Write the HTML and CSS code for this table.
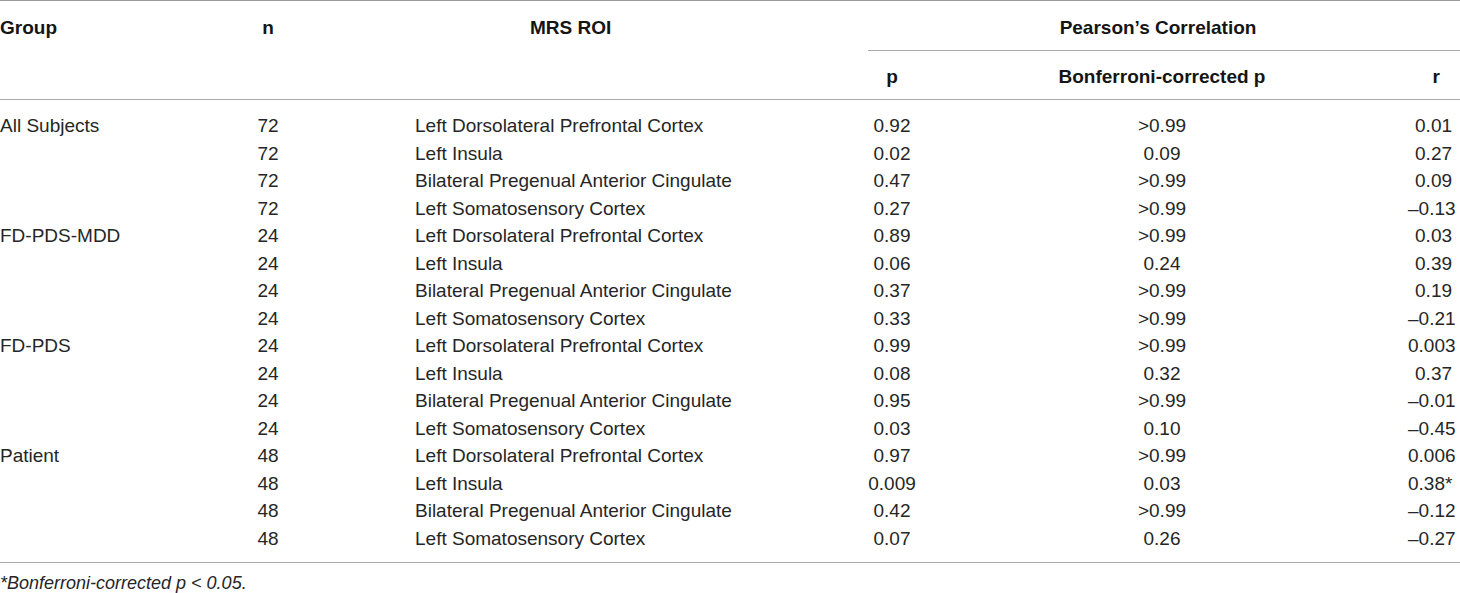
FILE: index.html
```html
<!DOCTYPE html>
<html>
<head>
<meta charset="utf-8">
<link rel="stylesheet" href="styles.css">
</head>
<body>
<div class="wrap">
<table class="tbl">
<colgroup>
<col class="c-group"><col class="c-n"><col class="c-roi"><col class="c-p"><col class="c-bp"><col class="c-r">
</colgroup>
<thead>
<tr class="h1">
<th class="th-group">Group</th>
<th class="th-n">n</th>
<th class="th-roi">MRS ROI</th>
<th class="th-pearson" colspan="3">Pearson’s Correlation</th>
</tr>
<tr class="h2">
<th></th><th></th><th></th>
<th class="th-p">p</th>
<th class="th-bp">Bonferroni-corrected p</th>
<th class="th-r">r</th>
</tr>
</thead>
<tbody>
<tr class="first"><td>All Subjects</td><td class="n">72</td><td class="roi">Left Dorsolateral Prefrontal Cortex</td><td class="p">0.92</td><td class="bp">&gt;0.99</td><td class="r">0.01</td></tr>
<tr><td></td><td class="n">72</td><td class="roi">Left Insula</td><td class="p">0.02</td><td class="bp">0.09</td><td class="r">0.27</td></tr>
<tr><td></td><td class="n">72</td><td class="roi">Bilateral Pregenual Anterior Cingulate</td><td class="p">0.47</td><td class="bp">&gt;0.99</td><td class="r">0.09</td></tr>
<tr><td></td><td class="n">72</td><td class="roi">Left Somatosensory Cortex</td><td class="p">0.27</td><td class="bp">&gt;0.99</td><td class="r">–0.13</td></tr>
<tr><td>FD-PDS-MDD</td><td class="n">24</td><td class="roi">Left Dorsolateral Prefrontal Cortex</td><td class="p">0.89</td><td class="bp">&gt;0.99</td><td class="r">0.03</td></tr>
<tr><td></td><td class="n">24</td><td class="roi">Left Insula</td><td class="p">0.06</td><td class="bp">0.24</td><td class="r">0.39</td></tr>
<tr><td></td><td class="n">24</td><td class="roi">Bilateral Pregenual Anterior Cingulate</td><td class="p">0.37</td><td class="bp">&gt;0.99</td><td class="r">0.19</td></tr>
<tr><td></td><td class="n">24</td><td class="roi">Left Somatosensory Cortex</td><td class="p">0.33</td><td class="bp">&gt;0.99</td><td class="r">–0.21</td></tr>
<tr><td>FD-PDS</td><td class="n">24</td><td class="roi">Left Dorsolateral Prefrontal Cortex</td><td class="p">0.99</td><td class="bp">&gt;0.99</td><td class="r">0.003</td></tr>
<tr><td></td><td class="n">24</td><td class="roi">Left Insula</td><td class="p">0.08</td><td class="bp">0.32</td><td class="r">0.37</td></tr>
<tr><td></td><td class="n">24</td><td class="roi">Bilateral Pregenual Anterior Cingulate</td><td class="p">0.95</td><td class="bp">&gt;0.99</td><td class="r">–0.01</td></tr>
<tr><td></td><td class="n">24</td><td class="roi">Left Somatosensory Cortex</td><td class="p">0.03</td><td class="bp">0.10</td><td class="r">–0.45</td></tr>
<tr><td>Patient</td><td class="n">48</td><td class="roi">Left Dorsolateral Prefrontal Cortex</td><td class="p">0.97</td><td class="bp">&gt;0.99</td><td class="r">0.006</td></tr>
<tr><td></td><td class="n">48</td><td class="roi">Left Insula</td><td class="p">0.009</td><td class="bp">0.03</td><td class="r">0.38*</td></tr>
<tr><td></td><td class="n">48</td><td class="roi">Bilateral Pregenual Anterior Cingulate</td><td class="p">0.42</td><td class="bp">&gt;0.99</td><td class="r">–0.12</td></tr>
<tr class="last"><td></td><td class="n">48</td><td class="roi">Left Somatosensory Cortex</td><td class="p">0.07</td><td class="bp">0.26</td><td class="r">–0.27</td></tr>
</tbody>
</table>
<p class="foot">*Bonferroni-corrected p &lt; 0.05.</p>
</div>
</body>
</html>
```
FILE: styles.css
```css
html, body {
  margin: 0;
  padding: 0;
  background: #fff;
}
.wrap {
  width: 1460px;
  font-family: "Liberation Sans", Arial, sans-serif;
  color: #262626;
}
.tbl {
  width: 1460px;
  table-layout: fixed;
  border-collapse: collapse;
  font-size: 19px;
  border-top: 1px solid #9a9a9a;
  border-bottom: 1px solid #aaaaaa;
}
.c-group { width: 220px; }
.c-n { width: 96px; }
.c-roi { width: 552px; }
.c-p { width: 48px; }
.c-bp { width: 492px; }
.c-r { width: 52px; }

.tbl th {
  font-weight: bold;
  color: #151515;
  padding: 0;
  white-space: nowrap;
}
.h1 th {
  height: 50px;
  vertical-align: top;
  padding-top: 16px;
  box-sizing: border-box;
  line-height: 22px;
}
.h2 th {
  height: 49px;
  line-height: 22px;
  vertical-align: middle;
  padding-top: 4px;
  box-sizing: border-box;
  border-bottom: 1px solid #aaaaaa;
}
.th-group { text-align: left; }
.th-n { text-align: center; }
.th-roi { text-align: left; padding-left: 214px !important; }
.th-pearson {
  text-align: center;
  border-bottom: 1px solid #aaaaaa;
  padding-right: 12px !important;
}
.th-p { text-align: center; border-top: 1px solid #aaaaaa; }
.th-bp { text-align: center; border-top: 1px solid #aaaaaa; }
.th-r { text-align: right; padding-right: 20px !important; border-top: 1px solid #aaaaaa; }

.tbl td {
  padding: 0;
  line-height: 27.5px;
  white-space: nowrap;
  vertical-align: middle;
}
.tbl tr.first td { padding-top: 12px; }
.tbl tr.last td { padding-bottom: 10px; }
.n { text-align: center; }
.roi { padding-left: 99px !important; }
.p { text-align: center; }
.bp { text-align: center; }
.r { text-align: right; padding-right: 8px !important; }

.foot {
  margin: 0;
  padding-top: 9px;
  font-size: 18px;
  line-height: 22px;
  font-style: italic;
  color: #262626;
}
```
